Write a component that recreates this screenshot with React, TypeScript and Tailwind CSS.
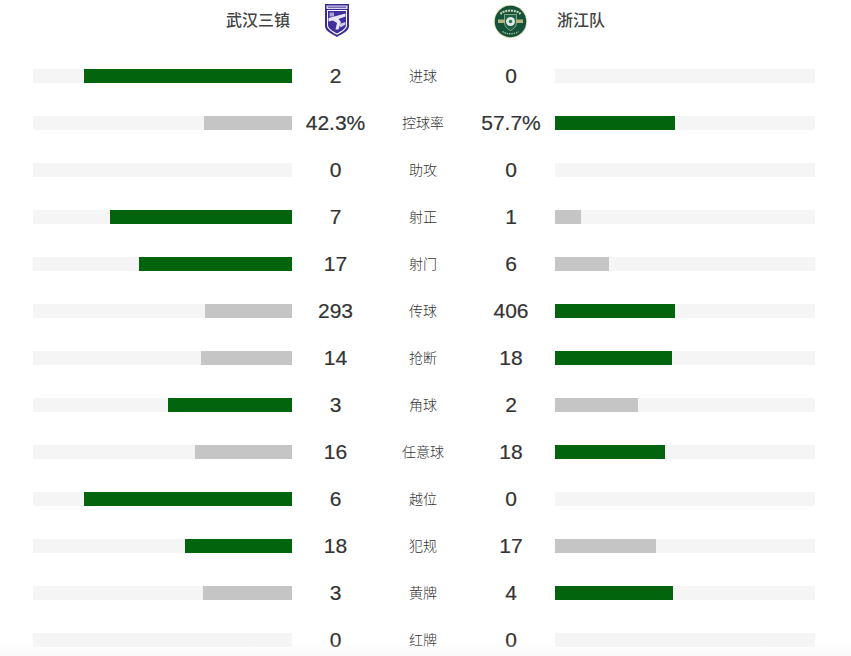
import React from 'react';

type Stat = {
  label: string;
  home: string;
  away: string;
  homeWidth: number;
  awayWidth: number;
  homeWins?: boolean;
  awayWins?: boolean;
};

const stats: Stat[] = [
  { label: '进球', home: '2', away: '0', homeWidth: 208, awayWidth: 0, homeWins: true },
  { label: '控球率', home: '42.3%', away: '57.7%', homeWidth: 88, awayWidth: 120, awayWins: true },
  { label: '助攻', home: '0', away: '0', homeWidth: 0, awayWidth: 0 },
  { label: '射正', home: '7', away: '1', homeWidth: 182, awayWidth: 26, homeWins: true },
  { label: '射门', home: '17', away: '6', homeWidth: 153, awayWidth: 54, homeWins: true },
  { label: '传球', home: '293', away: '406', homeWidth: 87, awayWidth: 120, awayWins: true },
  { label: '抢断', home: '14', away: '18', homeWidth: 91, awayWidth: 117, awayWins: true },
  { label: '角球', home: '3', away: '2', homeWidth: 124, awayWidth: 83, homeWins: true },
  { label: '任意球', home: '16', away: '18', homeWidth: 97, awayWidth: 110, awayWins: true },
  { label: '越位', home: '6', away: '0', homeWidth: 208, awayWidth: 0, homeWins: true },
  { label: '犯规', home: '18', away: '17', homeWidth: 107, awayWidth: 101, homeWins: true },
  { label: '黄牌', home: '3', away: '4', homeWidth: 89, awayWidth: 118, awayWins: true },
  { label: '红牌', home: '0', away: '0', homeWidth: 0, awayWidth: 0 },
];

const WuhanCrest = () => (
  <svg width="24" height="33" viewBox="0 0 24 33" className="block">
    <path d="M0 0H24V22C24 27 17 30 12 33C7 30 0 27 0 22Z" fill="#3a2a92" />
    <rect x="1.500" y="1.500" width="21" height="3.500" fill="#d9d6ee" />
    <rect x="3" y="2.600" width="18" height="1.200" fill="#5f52a8" />
    <path d="M2 6H22V21.500C22 25.500 16 28.500 12 30.800C8 28.500 2 25.500 2 21.500Z" fill="#fff" />
    <path d="M3 7H21V21C21 24.800 15.500 27.500 12 29.500C8.500 27.500 3 24.800 3 21Z" fill="#3f2f9a" />
    <path d="M3.500 14L20.500 9.500V12.500L13.500 15L16 18L13.500 25.500H10.500L12 19L8 16.500L3.500 17.500Z" fill="#e8e6f4" />
    <path d="M4.500 8.500H9V12.500H4.500Z" fill="#a9a3d6" />
    <path d="M14.500 20L20.500 18V20.500L15.500 23.500Z" fill="#cfcbe9" />
  </svg>
);

const ZhejiangCrest = () => (
  <svg width="33" height="33" viewBox="0 0 33 33" className="block">
    <circle cx="16.500" cy="16.500" r="16.500" fill="#d9d4a8" />
    <circle cx="16.500" cy="16.500" r="15.700" fill="#14533a" />
    <path d="M6.500 9C10 4.500 23 4.500 26.500 9" fill="none" stroke="#c3d0b2" strokeWidth="2.200" strokeDasharray="2 0.800" />
    <path d="M10.500 9.500H22.500V18C22.500 22 18.500 24.500 16.500 25.500C14.500 24.500 10.500 22 10.500 18Z" fill="#1a6347" stroke="#d8d3a5" strokeWidth="0.600" />
    <rect x="4" y="14.500" width="7" height="3.500" fill="#b9b27e" />
    <rect x="22" y="14.500" width="7" height="3.500" fill="#b9b27e" />
    <circle cx="16.500" cy="16.500" r="4.500" fill="#dfeae2" />
    <circle cx="16.500" cy="16.500" r="1.800" fill="#2b7558" />
    <path d="M8.500 26.500C12 29.500 21 29.500 24.500 26.500" fill="none" stroke="#9fb59b" strokeWidth="1.400" strokeDasharray="1.500 0.800" />
  </svg>
);

const Bar = ({ width, win, side }: { width: number; win?: boolean; side: 'left' | 'right' }) => (
  <div className={`flex h-[14px] bg-[#f5f5f5] ${side === 'left' ? 'w-[259px] justify-end' : 'w-[260px] justify-start'}`}>
    {width > 0 && (
      <div className={`h-full ${win ? 'bg-[#02640c]' : 'bg-[#c5c5c5]'}`} style={{ width }} />
    )}
  </div>
);

const App: React.FC = () => {
  return (
    <div className="relative h-[656px] w-[851px] overflow-hidden bg-white text-[#333] font-['Liberation_Sans','Noto_Sans_CJK_SC',sans-serif]">
      <div className="flex h-[40px] items-center">
        <div className="w-[290px] pt-[2px] text-right text-[16px] font-medium leading-none text-[#444]">武汉三镇</div>
        <div className="ml-[35px] w-[24px] pt-[1px]">
          <WuhanCrest />
        </div>
        <div className="ml-[145px] w-[33px] pt-[2px]">
          <ZhejiangCrest />
        </div>
        <div className="ml-[30px] pt-[2px] text-[16px] font-medium leading-none text-[#444]">浙江队</div>
      </div>
      <div className="mt-[12px] flex flex-col pl-[33px]">
        {stats.map((s) => (
          <div key={s.label} className="flex h-[47px] items-center">
            <Bar width={s.homeWidth} win={s.homeWins} side="left" />
            <div className="w-[87px] text-center text-[21px] leading-none text-[#333] [-webkit-text-stroke:0.2px_#333]">{s.home}</div>
            <div className="w-[88px] text-center text-[14px] font-light leading-none text-[#333]">{s.label}</div>
            <div className="w-[88px] text-center text-[21px] leading-none text-[#333] [-webkit-text-stroke:0.2px_#333]">{s.away}</div>
            <Bar width={s.awayWidth} win={s.awayWins} side="right" />
          </div>
        ))}
      </div>
      <div className="pointer-events-none absolute bottom-0 left-0 right-0 h-[14px] bg-gradient-to-b from-white/0 to-[#f6f6f6]/70" />
    </div>
  );
};

export default App;
